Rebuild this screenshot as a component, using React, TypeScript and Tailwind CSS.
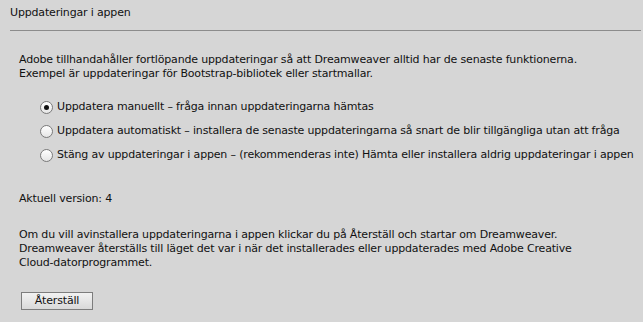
import React from "react";

function Radio({ checked }: { checked?: boolean }) {
  return (
    <div className="w-[13px] h-[13px] rounded-full border border-[#7a7a7a] bg-gradient-to-b from-[#ffffff] to-[#e6e6e6] flex items-center justify-center shrink-0">
      {checked && <div className="w-[5px] h-[5px] rounded-full bg-[#111]" />}
    </div>
  );
}

export default function App() {
  const rows = [
    { checked: true, text: "Uppdatera manuellt – fråga innan uppdateringarna hämtas" },
    { checked: false, text: "Uppdatera automatiskt – installera de senaste uppdateringarna så snart de blir tillgängliga utan att fråga" },
    { checked: false, text: "Stäng av uppdateringar i appen – (rekommenderas inte) Hämta eller installera aldrig uppdateringar i appen" },
  ];
  return (
    <div
      className="w-[643px] h-[322px] bg-[#d6d6d6] text-[#111] text-[11px] leading-[14px] tracking-[-0.17px] overflow-hidden"
      style={{ fontFamily: '"DejaVu Sans", "Liberation Sans", sans-serif' }}
    >
      <div className="pt-[6px] pl-[10px]">Uppdateringar i appen</div>
      <div className="mt-[10px] ml-[10px] mr-[2px] h-px bg-[#8c8c8c]" />
      <div className="px-[19px]">
        <p className="mt-[22px]">
          Adobe tillhandahåller fortlöpande uppdateringar så att Dreamweaver alltid har de senaste funktionerna.
          <br />
          Exempel är uppdateringar för Bootstrap-bibliotek eller startmallar.
        </p>
        <div className="mt-[14px] pl-[21px] flex flex-col">
          {rows.map((r, i) => (
            <div key={i} className="h-[24px] flex items-center gap-[4px] whitespace-nowrap">
              <Radio checked={r.checked} />
              <span>{r.text}</span>
            </div>
          ))}
        </div>
        <p className="mt-[25px]">Aktuell version: 4</p>
        <p className="mt-[22px]">
          Om du vill avinstallera uppdateringarna i appen klickar du på Återställ och startar om Dreamweaver.
          <br />
          Dreamweaver återställs till läget det var i när det installerades eller uppdaterades med Adobe Creative
          <br />
          Cloud-datorprogrammet.
        </p>
        <button className="mt-[22px] ml-[2px] w-[72px] h-[18px] border border-[#7d7d7d] bg-gradient-to-b from-[#f2f2f2] to-[#d9d9d9] flex items-center justify-center text-[11px] leading-[14px] text-[#111]">
          Återställ
        </button>
      </div>
    </div>
  );
}
